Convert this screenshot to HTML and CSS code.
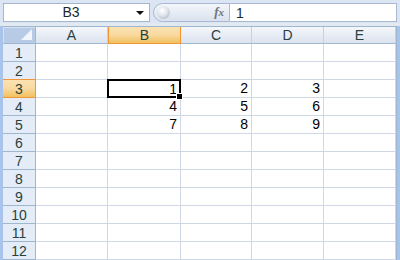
FILE: index.html
```html
<!DOCTYPE html>
<html lang="en">
<head>
    <meta charset="UTF-8">
    <title>Sheet1</title>
    <link rel="stylesheet" href="styles.css">
</head>
<body>
    <div class="formula-bar">
        <div class="name-box">
            <span class="name-text">B3</span>
            <span class="drop"></span>
        </div>
        <div class="fx-pill">
            <span class="knob"></span>
            <span class="fx">f<i>x</i></span>
        </div>
        <div class="formula-input">1</div>
    </div>

    <div class="sheet">
        <div class="corner"><span class="tri"></span></div>
        <div class="col-head">A</div>
        <div class="col-head active">B</div>
        <div class="col-head">C</div>
        <div class="col-head">D</div>
        <div class="col-head">E</div>

        <div class="row-head">1</div><div class="cell"></div><div class="cell"></div><div class="cell"></div><div class="cell"></div><div class="cell"></div>
        <div class="row-head">2</div><div class="cell"></div><div class="cell"></div><div class="cell"></div><div class="cell"></div><div class="cell"></div>
        <div class="row-head active">3</div><div class="cell"></div><div class="cell selected">1<span class="handle"></span></div><div class="cell">2</div><div class="cell">3</div><div class="cell"></div>
        <div class="row-head">4</div><div class="cell"></div><div class="cell">4</div><div class="cell">5</div><div class="cell">6</div><div class="cell"></div>
        <div class="row-head">5</div><div class="cell"></div><div class="cell">7</div><div class="cell">8</div><div class="cell">9</div><div class="cell"></div>
        <div class="row-head">6</div><div class="cell"></div><div class="cell"></div><div class="cell"></div><div class="cell"></div><div class="cell"></div>
        <div class="row-head">7</div><div class="cell"></div><div class="cell"></div><div class="cell"></div><div class="cell"></div><div class="cell"></div>
        <div class="row-head">8</div><div class="cell"></div><div class="cell"></div><div class="cell"></div><div class="cell"></div><div class="cell"></div>
        <div class="row-head">9</div><div class="cell"></div><div class="cell"></div><div class="cell"></div><div class="cell"></div><div class="cell"></div>
        <div class="row-head">10</div><div class="cell"></div><div class="cell"></div><div class="cell"></div><div class="cell"></div><div class="cell"></div>
        <div class="row-head">11</div><div class="cell"></div><div class="cell"></div><div class="cell"></div><div class="cell"></div><div class="cell"></div>
        <div class="row-head">12</div><div class="cell"></div><div class="cell"></div><div class="cell"></div><div class="cell"></div><div class="cell"></div>
    </div>
</body>
</html>
```

FILE: styles.css
```css
body {
    margin: 0;
    width: 400px;
    height: 260px;
    overflow: hidden;
    background: #a9c4eb;
    font-family: "Liberation Sans", Arial, sans-serif;
    color: #1b2a28;
}
.formula-bar {
    display: flex;
    align-items: center;
    height: 22px;
    padding: 1px 3px 0 3px;
    background: #dbe5f3;
    border-bottom: 3px solid #e3e9f1;
    box-sizing: content-box;
}
.name-box {
    display: flex;
    align-items: center;
    width: 147px;
    height: 19px;
    background: #fff;
    border: 1px solid #a5b6cc;
    box-sizing: border-box;
}
.name-text {
    flex: 1;
    text-align: center;
    font-size: 14px;
    padding-left: 10px;
}
.drop {
    width: 0;
    height: 0;
    margin: 2px 5px 0 8px;
    border-left: 4px solid transparent;
    border-right: 4px solid transparent;
    border-top: 4px solid #111;
}
.fx-pill {
    display: flex;
    align-items: center;
    justify-content: space-between;
    width: 77px;
    height: 19px;
    margin-left: 3px;
    border: 1px solid #a9bad0;
    border-radius: 10px 0 0 10px;
    background: linear-gradient(#f3f6fa, #d9e2ee);
    box-sizing: border-box;
}
.knob {
    width: 13px;
    height: 13px;
    margin-left: 3px;
    border-radius: 50%;
    background: radial-gradient(circle at 40% 35%, #ffffff 0, #dfe5ec 45%, #9aa6b3 100%);
}
.fx {
    font-family: "Liberation Serif", serif;
    font-style: italic;
    font-weight: bold;
    font-size: 13px;
    color: #6c7480;
    margin-right: 5px;
}
.fx i {
    font-size: 11px;
}
.formula-input {
    flex: 1;
    height: 19px;
    padding-left: 6px;
    font-size: 14px;
    line-height: 18px;
    background: #fff;
    border: 1px solid #a9bad0;
    border-left: none;
    box-sizing: border-box;
}
.sheet {
    display: grid;
    grid-template-columns: 33px 72px 73px 71px 72px 72px;
    grid-template-rows: 17px repeat(12, 18px);
    margin-left: 3px;
    width: 393px;
    background: #fff;
    border-top: 1px solid #9eb6ce;
    border-right: 1px solid #9eb6ce;
}
.corner {
    background: #b7cbe6;
    border-right: 1px solid #9eb6ce;
    border-bottom: 1px solid #9eb6ce;
    box-shadow: inset 1px 1px 0 #d6e2f2;
    position: relative;
}
.tri {
    position: absolute;
    right: 3px;
    bottom: 3px;
    width: 0;
    height: 0;
    border-left: 11px solid transparent;
    border-bottom: 11px solid #f2f6fb;
}
.col-head {
    text-align: center;
    font-size: 14px;
    line-height: 16px;
    background: linear-gradient(#f5f7fb, #e6ecf5 55%, #dbe3ee);
    border-right: 1px solid #c5d1e0;
    border-bottom: 1px solid #9eb6ce;
    color: #27413e;
}
.col-head.active {
    background: linear-gradient(#fbe2b3, #f9d99f 50%, #f1c15f);
    border: 1px solid #f29536;
    border-top: none;
}
.row-head {
    text-align: center;
    font-size: 14px;
    line-height: 18px;
    background: #e4ecf7;
    border-right: 1px solid #9eb6ce;
    border-bottom: 1px solid #9eb6ce;
    box-sizing: border-box;
    color: #27413e;
}
.row-head.active {
    background: linear-gradient(#fbe2b3, #f9d99f 50%, #f1c15f);
    border-right: 1px solid #f29536;
    border-bottom: 1px solid #f29536;
    border-top: 1px solid #f29536;
    margin-top: -1px;
    height: 19px;
}
.cell {
    text-align: right;
    font-size: 14px;
    line-height: 17px;
    padding-right: 3px;
    border-right: 1px solid #d0d7e5;
    border-bottom: 1px solid #d0d7e5;
    box-sizing: border-box;
    color: #000;
}
.cell.selected {
    position: relative;
    border: 2px solid #000;
    margin: -1px 0 0 -1px;
    line-height: 16px;
    padding-right: 2px;
}
.handle {
    position: absolute;
    right: -4px;
    bottom: -4px;
    width: 5px;
    height: 5px;
    background: #000;
    border: 1px solid #fff;
}
```
